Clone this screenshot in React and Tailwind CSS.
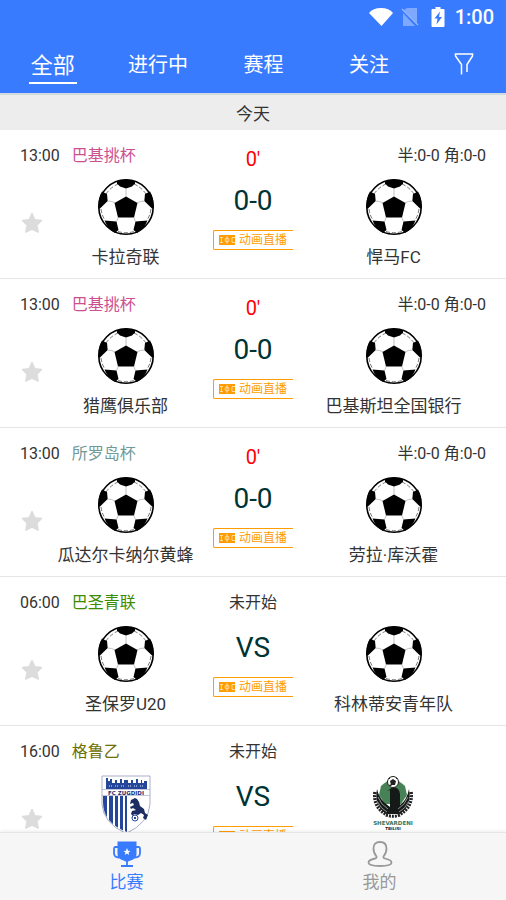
import React, { useCallback, useState } from "react";
import clsx from "clsx";

const TABS = ["全部", "进行中", "赛程", "关注"];

const MATCHES = [
  { id: 1, time: "13:00", league: "巴基挑杯", color: "text-[#cc5090]", minute: "0'", score: "0-0", extra: "半:0-0 角:0-0", home: "卡拉奇联", away: "悍马FC" },
  { id: 2, time: "13:00", league: "巴基挑杯", color: "text-[#cc5090]", minute: "0'", score: "0-0", extra: "半:0-0 角:0-0", home: "猎鹰俱乐部", away: "巴基斯坦全国银行" },
  { id: 3, time: "13:00", league: "所罗岛杯", color: "text-[#6f9a98]", minute: "0'", score: "0-0", extra: "半:0-0 角:0-0", home: "瓜达尔卡纳尔黄蜂", away: "劳拉·库沃霍" },
  { id: 4, time: "06:00", league: "巴圣青联", color: "text-[#3c8c00]", status: "未开始", score: "VS", home: "圣保罗U20", away: "科林蒂安青年队" },
  { id: 5, time: "16:00", league: "格鲁乙", color: "text-[#6e7000]", status: "未开始", score: "VS", homeLogo: "zugdidi", awayLogo: "shevardeni" },
];

const BallLogo = () => (
  <svg viewBox="0 0 56 56" className="size-14" aria-hidden="true">
    <circle cx="28" cy="28" r="27.2" fill="#fff" stroke="#000" strokeWidth="1.6" />
    <path d="M8 15Q13 8 20 5M36 5Q43 8 48 15M3 30Q4 37 7 41M53 30Q52 37 49 41M20 52.500Q28 55 36 52.500" fill="none" stroke="#555" strokeWidth="0.8" strokeDasharray="4 2" />
    <g fill="#000">
      <path d="M28 17.500 39.500 24 36 38.500H20L16.500 24Z" />
      <path d="M19 2Q28-1 37 2V4.500L34 7.500 28 9.500 22 7.500 19 4.500Z" />
      <path d="M4 12.500 9 15 9.700 22 2 29.500H.5Q-.5 20 4 12.500Z" />
      <path d="M52 12.500 47 15 46.300 22 54 29.500H55.500Q56.500 20 52 12.500Z" />
      <path d="M6.500 41.500 18.500 42.500 20.500 51 17 54Q10 50.500 6.500 41.500Z" />
      <path d="M49.500 41.500 37.500 42.500 35.500 51 39 54Q46 50.500 49.500 41.500Z" />
    </g>
    <path
      d="M28 9v9M9.500 22Q14 22 17 24M46.500 22Q42 22 39 24M20.500 38 18.300 43M35.500 38l2.200 5"
      fill="none"
      stroke="#999"
      strokeWidth="0.6"
    />
  </svg>
);

const ZugdidiLogo = () => (
  <svg viewBox="0 0 56 60" className="h-15 w-14" aria-hidden="true">
    <defs>
      <clipPath id="shield">
        <path d="M5 20H29V57Q5 48 5 27Z" />
      </clipPath>
    </defs>
    <path d="M4 1H52V29Q51 48 28 58.500 5 48 4 29Z" fill="#fff" stroke="#a9adc9" strokeWidth="1" />
    <path d="M8 14V3h2v3h2V4h2v4h3V5h2v3h3V4h2v4h2V5h4v3h3V5h2v3h3V4h2v4h3V5h1v3h2V6h3v8Z" fill="#24469b" />
    <path d="M11 11h3M17 11h3M23 11h3M30 11h3M36 11h3M42 11h3" stroke="#dfe5f6" strokeWidth="1" strokeDasharray="1 1" />
    <path d="M4 14.500H52M4 20.500H52" stroke="#a9adc9" strokeWidth="0.7" />
    <text x="28" y="19.500" textAnchor="middle" fontSize="5.500" fontWeight="700" fontFamily="DejaVu Sans, sans-serif" fill="#182e72">FC ZUGDIDI</text>
    <g clipPath="url(#shield)" fill="#24469b">
      <path d="M5 21h4v40H5zM11 21h4v40h-4zM17 21h3v40h-3zM22 21h3v40h-3zM27 21h2v40h-2z" />
    </g>
    <path d="M33 25l4-2 2 1 2 3 1 4 4 3 1 4 3 2-2 5-3-2 1-3-3-2-3 2-4-1-1 2-2-2 1-3 4-1-3-2-2 1-1-2 4-2-1-2-3 1Z" fill="#1c2d62" />
    <circle cx="37" cy="43" r="3" fill="#fff" stroke="#24469b" strokeWidth="1" />
    <path d="M36 42h2v2h-2z" fill="#24469b" />
  </svg>
);

const ShevardeniLogo = () => (
  <svg viewBox="0 0 56 60" className="h-15 w-14" aria-hidden="true">
    <path d="M15 11Q27-1 39 11L41 20 35 29H19L13 20Z" fill="#478257" />
    <path d="M11 14Q8 30 20 39H34Q46 30 43 14Q41 25 34 30V19Q33 12 27 12L21 16l3-1v17Q13 25 11 14Z" fill="#151918" />
    <path d="M12 22q3 8 10 12M11 26q4 8 10 11M42 22q-3 8-10 12M43 26q-4 8-10 11" fill="none" stroke="#b8c2bc" strokeWidth="0.7" />
    <path d="M9 17Q7 32 21 40M45 17Q47 32 33 40" fill="none" stroke="#222" strokeWidth="3.500" strokeDasharray="2 1" />
    <path d="M20 40Q27 42.500 34 40" fill="none" stroke="#222" strokeWidth="3" strokeDasharray="2 1" />
    <circle cx="27" cy="7" r="5.500" fill="#fff" stroke="#222" strokeWidth="1" />
    <path d="M27 4l3 2-1 4h-4l-1-4ZM22 4l2-2v2ZM32 4l-2-2v2ZM23 11l1-2 2 2Z" fill="#222" />
    <text x="27" y="50" textAnchor="middle" fontSize="5.500" fontWeight="700" fontFamily="DejaVu Sans, sans-serif" fill="#39755a">SHEVARDENI</text>
    <text x="27" y="55" textAnchor="middle" fontSize="4" fontWeight="700" fontFamily="DejaVu Sans, sans-serif" fill="#222">TBILISI</text>
  </svg>
);

const LOGOS = { zugdidi: ZugdidiLogo, shevardeni: ShevardeniLogo };

const Team = ({ name, logo }) => {
  const Logo = LOGOS[logo] || BallLogo;
  return (
    <div className="flex min-w-0 flex-1 flex-col items-center gap-2.5">
      <div className="flex h-14 items-start">
        <Logo />
      </div>
      {name && <span className="text-[17px] leading-6 whitespace-nowrap text-[#333]">{name}</span>}
    </div>
  );
};

const StatusBar = () => (
  <div className="flex h-8.5 items-center justify-end pr-3 text-white">
    <svg viewBox="0 0 24 18" className="mr-2 h-4.5 w-6" fill="currentColor" aria-hidden="true">
      <path d="M0 5Q4 0 12 0T24 5L12.500 18Z" />
    </svg>
    <svg viewBox="0 0 18 18" className="mr-3 size-4.5" aria-hidden="true">
      <path d="M6 0H16V15L3 2ZM2 5 14 18H2Z" fill="currentColor" opacity="0.35" />
      <path d="M1 1 17 17" stroke="currentColor" strokeWidth="1.500" opacity="0.45" />
    </svg>
    <svg viewBox="0 0 13 20" className="mr-2.5 h-5 w-3.5" aria-hidden="true">
      <path d="M4 0h5v2h3q1 0 1 1v16q0 1-1 1H1q-1 0-1-1V3q0-1 1-1h3Z" fill="currentColor" />
      <path d="M8.500 4.500 3 11.500h3L5 17.500l5.500-7.500H7.500Z" fill="#397bff" />
    </svg>
    <span className="text-[20px] leading-6 font-medium">1:00</span>
  </div>
);

const LiveBadge = () => (
  <button type="button" className="flex h-5 w-20 items-center gap-1 rounded-l-xs border border-r-0 border-[#ff9c00] pl-[5px] text-xs text-[#ff9c00]">
    <svg viewBox="0 0 16 10" className="h-2.5 w-4" aria-hidden="true">
      <path d="M0 0H16V10H0Z" fill="currentColor" />
      <path d="M1 2.500H4M1 7.500H4M2.500 2.500V7.500M16 2.500H13V7.500H16M8 1V9" fill="none" stroke="#fff" strokeWidth="0.6" />
      <circle cx="8" cy="5" r="2" fill="none" stroke="#fff" strokeWidth="0.6" />
    </svg>
    <span className="whitespace-nowrap">动画直播</span>
  </button>
);

const MatchRow = ({ match, starred, onStar }) => (
  <li className="grid h-[149px] grid-cols-[1fr_80px_1fr] border-b border-[#e6e6e6] px-5 pt-4">
    <div className="flex min-w-0 flex-col gap-[13px]">
      <div className="flex h-5 items-center gap-3 text-base whitespace-nowrap">
        <span className="text-[#333]">{match.time}</span>
        <span className={match.color}>{match.league}</span>
      </div>
      <div className="flex items-start pr-1.5">
        <button
          type="button"
          aria-label="关注"
          aria-pressed={starred}
          onClick={() => onStar(match.id)}
          className={clsx("flex h-22 w-6 items-center justify-center", starred ? "text-[#ff9c00]" : "text-[#dcdcdc]")}
        >
          <svg viewBox="0 0 22 22" className="size-5.5" fill="currentColor" stroke="currentColor" strokeWidth="1.500" strokeLinejoin="round" aria-hidden="true">
            <path d="M11 1.500 13.800 7.800 20.500 8.500 15.800 13.200 17.200 20 11 17 4.800 20 6.200 13.200 1.500 8.500 8.200 7.800Z" />
          </svg>
        </button>
        <Team name={match.home} logo={match.homeLogo} />
      </div>
    </div>

    <div className="flex flex-col items-center">
      {match.minute ? (
        <span className="h-[35px] pt-px text-[20px] leading-6 text-[#f00]">{match.minute}</span>
      ) : (
        <span className="h-[35px] text-base leading-5 whitespace-nowrap text-[#333]">{match.status}</span>
      )}
      <span className="h-[49px] pt-1 text-[28px] leading-8 text-[#033]">{match.score}</span>
      <LiveBadge />
    </div>

    <div className="flex min-w-0 flex-col gap-[13px]">
      <div className="flex h-5 items-center justify-end text-base whitespace-nowrap text-[#333]">{match.extra}</div>
      <div className="flex pl-2">
        <Team name={match.away} logo={match.awayLogo} />
      </div>
    </div>
  </li>
);

const TrophyIcon = () => (
  <svg viewBox="0 0 28 26" className="h-6.5 w-7" aria-hidden="true">
    <path d="M4.500 0.500H23.500V13Q23.500 17 20 18.500L14 21 8 18.500Q4.500 17 4.500 13Z" fill="currentColor" />
    <path d="M5 6H2.500Q1 6 1 8V12Q1 16.500 6 16.500M23 6H25.500Q27 6 27 8V12Q27 16.500 22 16.500M14 20V24.500M8 25H20" fill="none" stroke="currentColor" strokeWidth="1.800" />
    <path d="M14 7l1 2.800 2.500.1-2 1.700.7 2.400-2.200-1.400-2.200 1.400.7-2.400-2-1.700 2.500-.1Z" fill="#fff" />
  </svg>
);

const PersonIcon = () => (
  <svg viewBox="0 0 28 26" className="h-6.5 w-7" aria-hidden="true">
    <path
      d="M10.500 15.500Q7.500 12 7.500 7.500 7.500 1 14 1 20.500 1 20.500 7.500 20.500 12 17.500 15.500 17 17 19 17.500 25.500 19 25.500 21.500 25.500 25 14 25 2.500 25 2.500 21.500 2.500 19 9 17.500 11 17 10.500 15.500Z"
      fill="none"
      stroke="currentColor"
      strokeWidth="1.800"
    />
  </svg>
);

const App = () => {
  const [activeTab, setActiveTab] = useState("全部");
  const [starred, setStarred] = useState([]);

  const handleStar = useCallback((id) => {
    setStarred((prev) => (prev.includes(id) ? prev.filter((x) => x !== id) : [...prev, id]));
  }, []);

  return (
    <div className="flex h-screen flex-col bg-white font-[Roboto,'Noto_Sans_CJK_SC',sans-serif]">
      {/* Header */}
      <header className="shrink-0 border-b-2 border-[#d3dcdc] bg-[#397bff]">
        <StatusBar />
        <nav className="grid h-[59px] grid-cols-[5fr_5fr_5fr_5fr_4fr] text-white">
          {TABS.map((tab) => (
            <button key={tab} type="button" onClick={() => setActiveTab(tab)} className="flex flex-col items-center pt-3.5">
              <span
                className={clsx(
                  "flex h-9 items-center border-b-2",
                  tab === activeTab ? "border-white px-0.5 text-[22px]" : "border-transparent text-[20px]"
                )}
              >
                {tab}
              </span>
            </button>
          ))}
          <button type="button" aria-label="筛选" className="flex items-center justify-center">
            <svg viewBox="0 0 20 22" className="h-5.5 w-5" fill="none" stroke="currentColor" strokeWidth="1.500" aria-hidden="true">
              <path d="M7.500 21.500V11.500L1.500 3V1H18.500V3L13 11.500V19" />
            </svg>
          </button>
        </nav>
      </header>

      {/* Match list */}
      <main className="min-h-0 flex-1 overflow-hidden">
        <h2 className="flex h-[35px] items-center justify-center bg-[#ededed] pt-1 text-[17px] text-[#333]">今天</h2>
        <ul>
          {MATCHES.map((match) => (
            <MatchRow key={match.id} match={match} starred={starred.includes(match.id)} onStar={handleStar} />
          ))}
        </ul>
      </main>

      {/* Bottom navigation */}
      <nav className="grid h-17 shrink-0 grid-cols-2 border-t border-[#e6e6e6] bg-[#f6f6f6] text-[17px] leading-6 shadow-[0_-1px_3px_rgba(0,0,0,0.08)]">
        <a href="#matches" className="flex flex-col items-center gap-[3px] pt-2 text-[#397bff]">
          <TrophyIcon />
          比赛
        </a>
        <a href="#me" className="flex flex-col items-center gap-[3px] pt-2 text-[#999]">
          <PersonIcon />
          我的
        </a>
      </nav>
    </div>
  );
};

export default App;
